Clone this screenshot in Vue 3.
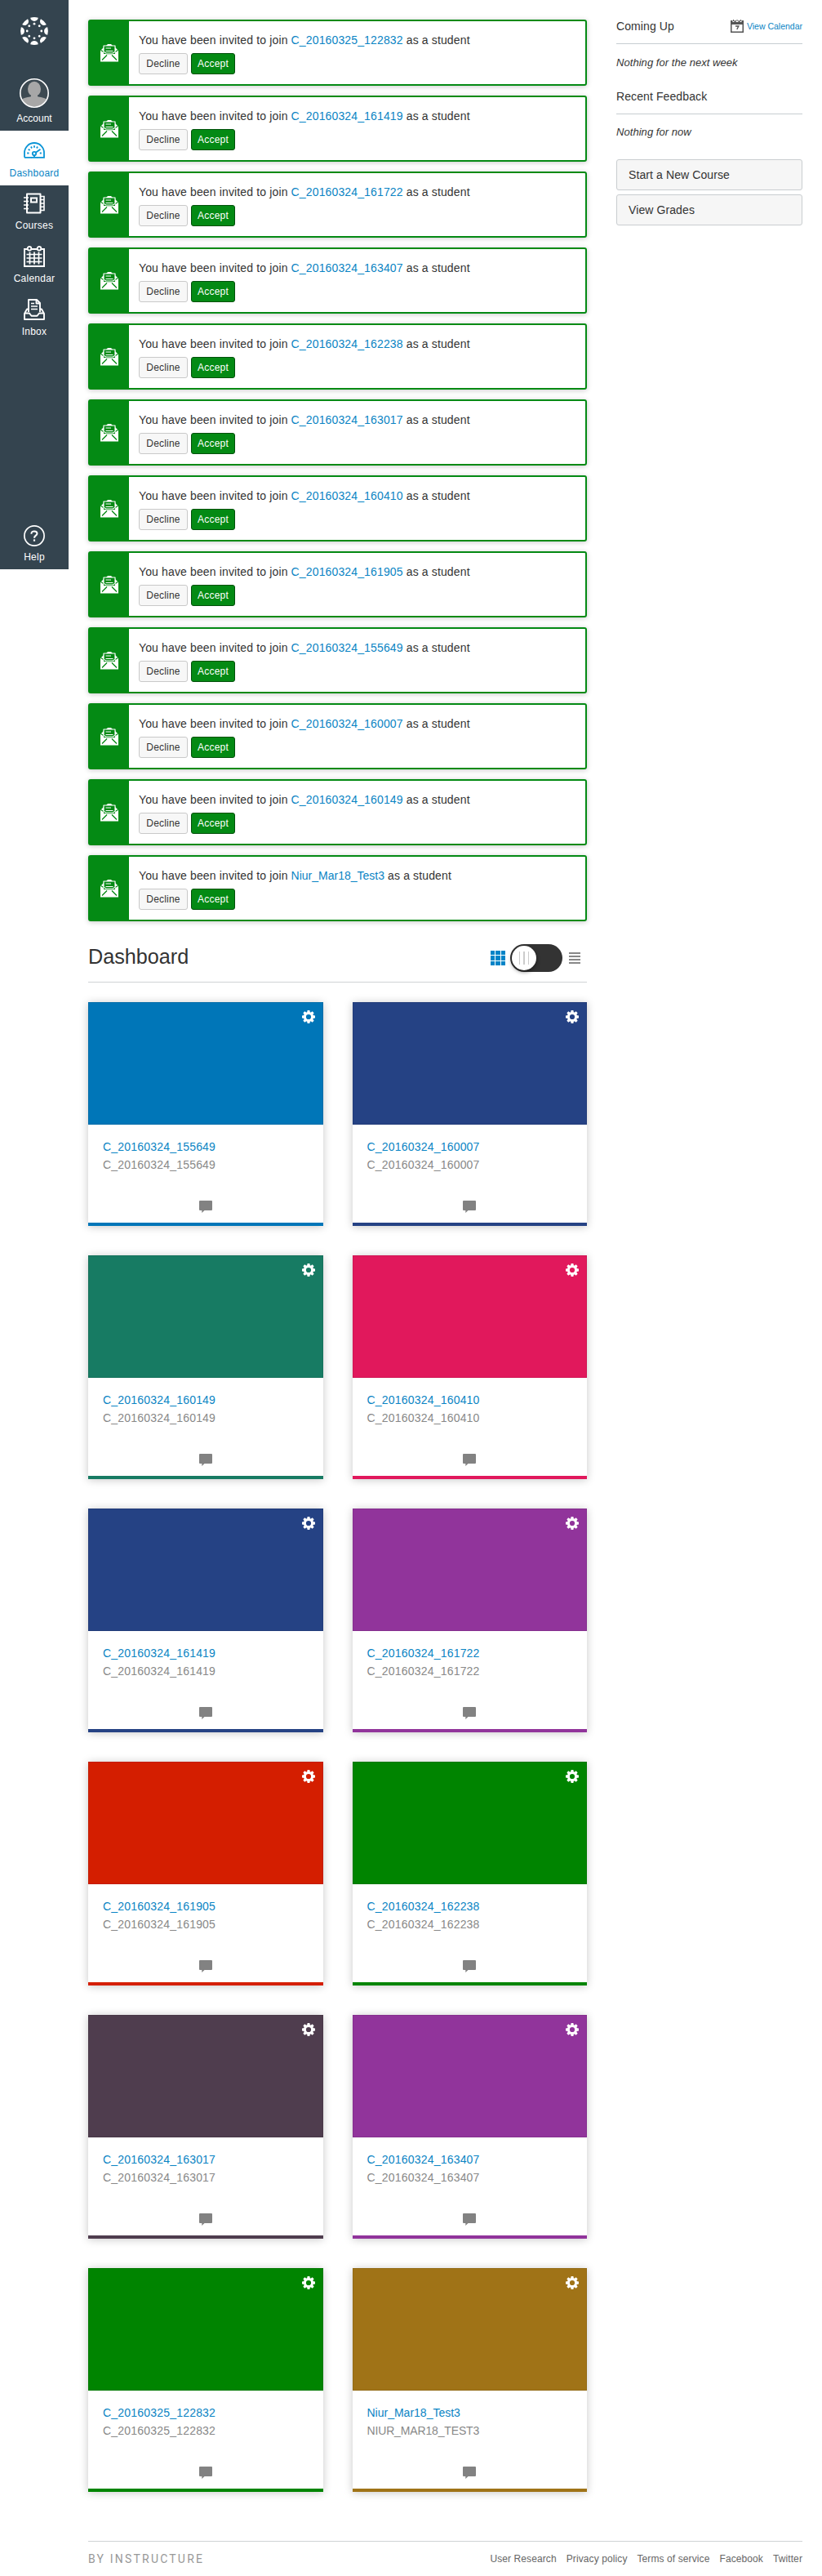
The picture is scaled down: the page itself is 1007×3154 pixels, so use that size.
<script setup>
const invites = ['C_20160325_122832', 'C_20160324_161419', 'C_20160324_161722', 'C_20160324_163407', 'C_20160324_162238', 'C_20160324_163017', 'C_20160324_160410', 'C_20160324_161905', 'C_20160324_155649', 'C_20160324_160007', 'C_20160324_160149', 'Niur_Mar18_Test3']
const cards = [
  ['C_20160324_155649', '#0076b8'], ['C_20160324_160007', '#254284'],
  ['C_20160324_160149', '#177b63'], ['C_20160324_160410', '#e1185c'],
  ['C_20160324_161419', '#254284'], ['C_20160324_161722', '#91349b'],
  ['C_20160324_161905', '#d41e00'], ['C_20160324_162238', '#008400'],
  ['C_20160324_163017', '#4f3d4e'], ['C_20160324_163407', '#91349b'],
  ['C_20160325_122832', '#008400'], ['Niur_Mar18_Test3', '#a07317'],
].map(([name, color]) => ({ name, color, code: name.startsWith('Niur') ? name.toUpperCase() : name }))
const wedges = [0, 45, 90, 135, 180, 225, 270, 315]
</script>

<template>
  <div class="app">
    <nav class="nav">
      <a class="logo">
        <svg width="36" height="36" viewBox="-18 -18 36 36" fill="#fff">
          <g v-for="a in wedges" :key="a" :transform="`rotate(${a})`">
            <path d="M-4.8 -16.2A17 17 0 0 1 4.8 -16.2C4.3 -10.7 -4.3 -10.7 -4.8 -16.2Z" />
            <circle cy="-8.8" r="1.4" />
          </g>
        </svg>
      </a>
      <a class="item account">
        <svg width="36" height="36" viewBox="0 0 36 36">
          <defs><clipPath id="face"><circle cx="18" cy="18" r="16.6" /></clipPath></defs>
          <circle cx="18" cy="18" r="17" fill="#3d4a52" />
          <g clip-path="url(#face)" fill="#a7a7a7">
            <ellipse cx="18" cy="13" rx="8" ry="9.2" />
            <path d="M14 19h8v3c2 1.800 10 0 12.500 6v9h-33v-9C4 22 12 23.800 14 22Z" />
          </g>
          <circle cx="18" cy="18" r="17.200" fill="none" stroke="#fff" stroke-width="1.600" />
        </svg>
        <span>Account</span>
      </a>
      <a class="item active">
        <svg width="26" height="20" viewBox="0 0 26 20" fill="none" stroke="#0a94d6" stroke-width="1.800">
          <path d="M1 18.800V13A12 12 0 0 1 25 13v5.800H16.500M1 18.800H9.500" />
          <circle cx="13" cy="14" r="2.200" />
          <path d="M14.800 12.800L20.500 8.800M13 16v2.800M9 18.800h8M4.200 13.500h2.300M19.800 13.500h2M5.700 8.800l1.900 1.300M9 5.500l1 2M13 4.200v2.500M17 5.500l-1 2" />
        </svg>
        <span class="wide">Dashboard</span>
      </a>
      <a class="item">
        <svg class="t" width="26" height="26" viewBox="0 0 26 26" fill="none" stroke="#fff" stroke-width="2">
          <path d="M4 1.500H20.500V24.500H4Z" stroke-linejoin="round" />
          <path d="M9 6.500h7v5H9Z" />
          <path d="M0 6h6M0 10.500h6M0 15h6M0 19.500h6" stroke-width="1.600" />
          <path d="M20.500 4.500H25V8.500H20.500M25 8.500V13H20.500M25 13V17.300H20.500M25 17.300V21.500H20.500" stroke-width="1.600" />
        </svg>
        <span class="wide">Courses</span>
      </a>
      <a class="item">
        <svg class="t" width="26" height="26" viewBox="0 0 26 26" fill="none" stroke="#fff">
          <path d="M4.500 4H1V25H25V4H21.500M9.500 4H16.500" stroke-width="2" />
          <circle cx="7" cy="3.300" r="2.300" stroke-width="1.800" /><circle cx="19" cy="3.300" r="2.300" stroke-width="1.800" />
          <path d="M3.500 10.500h19M3.500 15h19M3.500 19.500h19M7.500 7.500v15M13 7.500v15M18.500 7.500v15" stroke-width="1.700" />
        </svg>
        <span class="wide">Calendar</span>
      </a>
      <a class="item">
        <svg class="t" width="26" height="26" viewBox="0 0 26 26" fill="none" stroke="#fff" stroke-width="1.900" stroke-linejoin="round">
          <path d="M6 16V1H16L20 5V16M15.500 1v4.500H20" />
          <path d="M9 5.500h4M9 9h8M9 12.500h8" stroke-width="1.500" />
          <path d="M6 12.500H4L1 18V25H25V18L22 12.500H20M1.500 17.500H7L9.500 20.800H16.500L19 17.500H24.500" />
        </svg>
        <span class="wide">Inbox</span>
      </a>
      <a class="item help">
        <svg width="26" height="26" viewBox="0 0 26 26" fill="none" stroke="#fff">
          <circle cx="13" cy="13" r="12.100" stroke-width="1.700" />
          <path d="M9.500 10.800V10C9.500 6.500 16.500 6.500 16.500 10.200C16.500 12.700 13 12.600 13 15.700" stroke-width="2" />
          <path d="M13 17.400v2.300" stroke-width="2.200" />
        </svg>
        <span class="wide">Help</span>
      </a>
    </nav>

    <div class="content">
      <div class="columns">
        <main>
          <section class="invites">
            <article v-for="name in invites" :key="name" class="invite">
              <div class="mark">
                <svg width="24" height="24" viewBox="0 0 24 24">
                  <path d="M1 9L5 5V13H19V5L23 9V22.500H1Z" fill="#fff" />
                  <path d="M8 3L10 1H14L16 3Z" fill="#fff" />
                  <path d="M1.500 8.500L8.500 12.500H15.500L22.500 8.500" fill="none" stroke="#048a14" stroke-width="1.300" />
                  <path d="M5 3H19V10.500L16 12H8L5 10.500Z" fill="#048a14" stroke="#fff" stroke-width="1.200" stroke-linejoin="round" />
                  <path d="M7.500 6H14M7.500 9.500H16.500" stroke="#fff" stroke-width="1" />
                  <path d="M3 20.500L9 14.500M21 20.500L15 14.500" fill="none" stroke="#048a14" stroke-width="1.300" />
                </svg>
              </div>
              <div class="body">
                <p>You have been invited to join <a>{{ name }}</a> as a student</p>
                <div class="actions">
                  <button class="decline">Decline</button>
                  <button class="accept">Accept</button>
                </div>
              </div>
            </article>
          </section>

          <header class="heading">
            <h1>Dashboard</h1>
            <div class="views">
              <svg width="18" height="18" viewBox="0 0 18 18" fill="#0084c7">
                <path d="M0 0h5v5H0zM6 0h6v5H6zM13 0h5v5h-5zM0 6h5v6H0zM6 6h6v6H6zM13 6h5v6h-5zM0 13h5v5H0zM6 13h6v5H6zM13 13h5v5h-5z" />
              </svg>
              <div class="toggle"><div class="knob"><i /><i /><i /></div></div>
              <svg width="14" height="14" viewBox="0 0 14 14" fill="#888">
                <path d="M0 0h14v2H0zM0 4h14v2H0zM0 8h14v2H0zM0 12h14v2H0z" />
              </svg>
            </div>
          </header>

          <section class="cards">
            <article v-for="c in cards" :key="c.name" class="card" :style="{ borderColor: c.color }">
              <div class="hero" :style="{ background: c.color }">
                <svg width="16" height="16" viewBox="-8 -8 16 16" fill="#fff">
                  <path v-for="a in wedges" :key="a" :transform="`rotate(${a})`" d="M-1.900 -5L-1.400 -8H1.400L1.900 -5Z" />
                  <circle r="4.600" fill="none" stroke="#fff" stroke-width="3" />
                </svg>
              </div>
              <div class="info">
                <a>{{ c.name }}</a>
                <span>{{ c.code }}</span>
              </div>
              <svg class="chat" width="16" height="15" viewBox="0 0 16 15" fill="#828282">
                <path d="M1 0H15Q16 0 16 1V11Q16 12 15 12H6.500L3.300 15V12H1Q0 12 0 11V1Q0 0 1 0Z" />
              </svg>
            </article>
          </section>
        </main>

        <aside>
          <div class="title">
            <h2>Coming Up</h2>
            <a>
              <svg width="16" height="16" viewBox="0 0 16 16">
                <path d="M0 1H2.500V3H4.500V1H6.500V3H9.500V1H11.500V3H13.500V1H16V16H0Z" fill="#555" />
                <path d="M3 0h1v2H3zM7.500 0h1v2h-1zM12 0h1v2h-1z" fill="#555" />
                <path d="M1.500 6h13v8.500h-13z" fill="#fff" />
                <path d="M6 8h3.800L7.800 12" fill="none" stroke="#555" stroke-width="1.400" />
              </svg>
              <span>View Calendar</span>
            </a>
          </div>
          <p>Nothing for the next week</p>
          <div class="title second"><h2>Recent Feedback</h2></div>
          <p>Nothing for now</p>
          <div class="links">
            <button>Start a New Course</button>
            <button>View Grades</button>
          </div>
        </aside>
      </div>

      <footer>
        <span class="brand">BY INSTRUCTURE</span>
        <div class="flinks">
          <a>User Research</a><a>Privacy policy</a><a>Terms of service</a><a>Facebook</a><a>Twitter</a>
        </div>
      </footer>
    </div>
  </div>
</template>

<style>
body { margin: 0; background: #fff; }
</style>

<style scoped>
* { box-sizing: border-box; }
.app { display: flex; align-items: flex-start; width: 1007px; height: 3154px; overflow: hidden; font-family: "Liberation Sans", Arial, sans-serif; font-size: 14px; line-height: 20px; color: #333; }
h1, h2, p { margin: 0; font-weight: normal; }
svg { display: block; flex: none; }
button { font-family: inherit; cursor: pointer; }
.nav { width: 84px; height: 697px; background: #34444f; display: flex; flex-direction: column; flex: none; }
.logo { height: 87px; padding: 19.500px 0 0 24px; }
.item { height: 65px; padding-top: 9px; display: flex; flex-direction: column; align-items: center; color: #fff; font-size: 12px; line-height: 16px; }
.item svg.t { margin-bottom: 6px; }
.item .wide { letter-spacing: .25px; }
.account { height: 73px; }
.account svg { margin-bottom: 5px; }
.active { height: 67px; padding-top: 14px; background: #fff; color: #0a84c4; }
.active svg { margin-bottom: 10px; }
.help { margin-top: auto; height: 63px; }
.help svg { margin-bottom: 5px; }
.content { flex: 1; padding: 24px 24px 0; }
.columns { display: flex; justify-content: space-between; }
main { width: 611px; }
.invites { display: flex; flex-direction: column; gap: 12px; }
.invite { display: flex; height: 81px; border: 2px solid #048a14; border-radius: 3px; box-shadow: 0 1px 6px rgba(0, 0, 0, .22); background: #fff; }
.mark { width: 48px; background: #048a14; display: flex; align-items: center; justify-content: center; }
.body { padding: 13px 12px; }
.body p { letter-spacing: .14px; }
.invite:last-child a { letter-spacing: 0; }
.body a, .info a { color: #0a84c4; }
.actions { display: flex; gap: 4px; margin-top: 6px; }
.actions button { height: 26px; padding: 1px 0 0; font-size: 12px; line-height: 23px; border-radius: 3px; letter-spacing: .2px; }
.decline { width: 60px; background: #f7f7f7; border: 1px solid #c9c9c9; color: #333; }
.accept { width: 54px; background: #048a14; border: 1px solid #02500b; color: #fff; }
.heading { display: flex; align-items: center; justify-content: space-between; height: 75px; padding: 15px 8px 0 0; border-bottom: 1px solid #d0d3d5; }
h1 { font-size: 25.200px; line-height: 36px; margin-top: -4px; }
.views { display: flex; align-items: center; }
.toggle { width: 64px; height: 34px; border-radius: 17px; background: #333; margin: 0 8px 0 6px; padding: 2px; }
.knob { width: 30px; height: 30px; border-radius: 50%; background: #fff; display: flex; align-items: center; justify-content: center; gap: 4px; box-shadow: 0 2px 5px rgba(0, 0, 0, .5); }
.knob i { width: 1.500px; height: 16px; background: #ccc; }
.cards { display: grid; grid-template-columns: 1fr 1fr; gap: 36px; margin-top: 24px; }
.card { height: 274px; border-bottom: 4px solid; background: #fff; box-shadow: 0 1px 10px rgba(0, 0, 0, .22); display: flex; flex-direction: column; }
.hero { height: 150px; padding: 10px; display: flex; justify-content: flex-end; box-shadow: inset 0 0 0 1px rgba(0, 0, 0, .08); }
.info { height: 93px; padding: 16px 18px 0; display: flex; flex-direction: column; line-height: 22px; letter-spacing: .2px; }
.info span { color: #888; }
.card:last-child .info a { letter-spacing: 0; }
.card:last-child .info span { letter-spacing: -.15px; }
.chat { align-self: center; }
aside { width: 228px; }
.title { display: flex; justify-content: space-between; height: 30px; border-bottom: 1px solid #c7cdd1; }
h2 { font-size: 14px; line-height: 20px; margin-top: -2px; letter-spacing: .1px; }
.title a { display: flex; gap: 4px; color: #0a84c4; font-size: 10.500px; line-height: 16px; white-space: nowrap; }
aside p { font-size: 13px; font-style: italic; margin-top: 13px; letter-spacing: .05px; }
.title.second { margin-top: 23px; }
.title.second + p { margin-top: 12px; }
.links { margin-top: 23px; display: flex; flex-direction: column; gap: 5px; }
.links button { height: 38px; border: 1px solid #c9cdd0; border-radius: 3px; background: #f6f6f6; color: #333; font-size: 14px; text-align: left; padding: 0 14px; letter-spacing: .1px; }
footer { margin-top: 60px; border-top: 1px solid #d0d3d5; height: 40px; padding-top: 11px; display: flex; justify-content: space-between; }
.brand { font-family: Roboto, sans-serif; font-size: 14px; line-height: 21px; letter-spacing: 2.200px; color: #999; }
.flinks { display: flex; gap: 12px; font-size: 12px; line-height: 20px; color: #666; letter-spacing: .1px; }
</style>
